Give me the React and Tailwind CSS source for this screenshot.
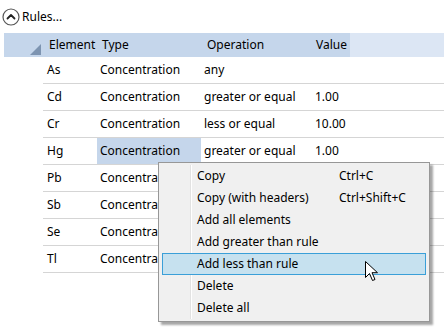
import React from 'react'

const rules = [
  { el: 'As', type: 'Concentration', op: 'any', value: '' },
  { el: 'Cd', type: 'Concentration', op: 'greater or equal', value: '1.00' },
  { el: 'Cr', type: 'Concentration', op: 'less or equal', value: '10.00' },
  { el: 'Hg', type: 'Concentration', op: 'greater or equal', value: '1.00', selected: true },
  { el: 'Pb', type: 'Concentration', op: 'greater or equal', value: '1.00' },
  { el: 'Sb', type: 'Concentration', op: 'greater or equal', value: '1.00' },
  { el: 'Se', type: 'Concentration', op: 'greater or equal', value: '1.00' },
  { el: 'Tl', type: 'Concentration', op: 'greater or equal', value: '1.00' },
]

const menuItems = [
  { label: 'Copy', shortcut: 'Ctrl+C' },
  { label: 'Copy (with headers)', shortcut: 'Ctrl+Shift+C' },
  { label: 'Add all elements' },
  { label: 'Add greater than rule' },
  { label: 'Add less than rule', hover: true },
  { label: 'Delete' },
  { label: 'Delete all' },
]

export default function App() {
  return (
    <div className="relative w-[444px] h-[332px] overflow-hidden bg-white text-[12px] text-black font-['Noto_Sans',sans-serif]">
      {/* Section title */}
      <div className="flex items-center h-[33px] pl-[2px] gap-[2px]">
        <svg width="18" height="18" viewBox="0 0 18 18" fill="none">
          <circle cx="9" cy="9" r="8" stroke="#555" strokeWidth="1.2" />
          <path d="M5.5 10.5 9 7l3.5 3.5" stroke="#222" strokeWidth="1.8" strokeLinecap="round" strokeLinejoin="round" />
        </svg>
        <span>Rules...</span>
      </div>

      {/* Header */}
      <div className="flex ml-[4px] h-[24px] items-center">
        <div className="flex h-full bg-[#c5d6eb] items-center">
          <div className="w-[39px] h-full flex items-end justify-end pr-[2px] pb-[2px]">
            <svg width="11" height="11" viewBox="0 0 11 11">
              <path d="M0 11 11 0v11z" fill="#7d94b1" />
            </svg>
          </div>
          <div className="w-[54px] pl-[6px]">Element</div>
          <div className="w-[104px] pl-[5px]">Type</div>
          <div className="w-[110px] pl-[6px]">Operation</div>
          <div className="w-[39px] pl-[5px]">Value</div>
        </div>
        <div className="flex-1 h-full bg-[#dce6f4]" />
      </div>

      {/* Rows */}
      <div className="ml-[43px]">
        {rules.map((r) => (
          <div key={r.el} className="flex h-[27px] border-b border-[#d5d5d5]">
            <div className="w-[54px] pl-[4px] flex items-center">{r.el}</div>
            <div className={`w-[104px] pl-[3px] flex items-center ${r.selected ? 'bg-[#c5d6eb]' : ''}`}>{r.type}</div>
            <div className="w-[110px] pl-[3px] flex items-center">{r.op}</div>
            <div className="w-[60px] pl-[4px] flex items-center">{r.value}</div>
          </div>
        ))}
      </div>

      {/* Context menu */}
      <div className="absolute left-[158px] top-[162px] w-[272px] bg-[#f0f0f0] border border-[#979797] py-[2px] shadow-[3px_3px_2px_rgba(0,0,0,0.35)]">
        <div className="absolute left-[31px] top-[2px] bottom-[2px] w-[2px] border-l border-[#e2e2e2] bg-white" />
        {menuItems.map((m) => (
          <div
            key={m.label}
            className={`relative flex items-center h-[22px] mx-[3px] pl-[34px] border ${m.hover ? 'bg-[#c6e1ef] border-[#3a9fd8]' : 'border-transparent'}`}
          >
            <span className="w-[142px]">{m.label}</span>
            {m.shortcut && <span>{m.shortcut}</span>}
          </div>
        ))}
      </div>

      {/* Mouse pointer */}
      <svg className="absolute left-[365px] top-[261px]" width="13" height="21" viewBox="0 0 13 21">
        <path d="M0.5 0.5v16l4-4 3 7 2.5-1-3-6.8h5.5z" fill="#fff" stroke="#000" strokeWidth="1" strokeLinejoin="miter" />
      </svg>
    </div>
  )
}
